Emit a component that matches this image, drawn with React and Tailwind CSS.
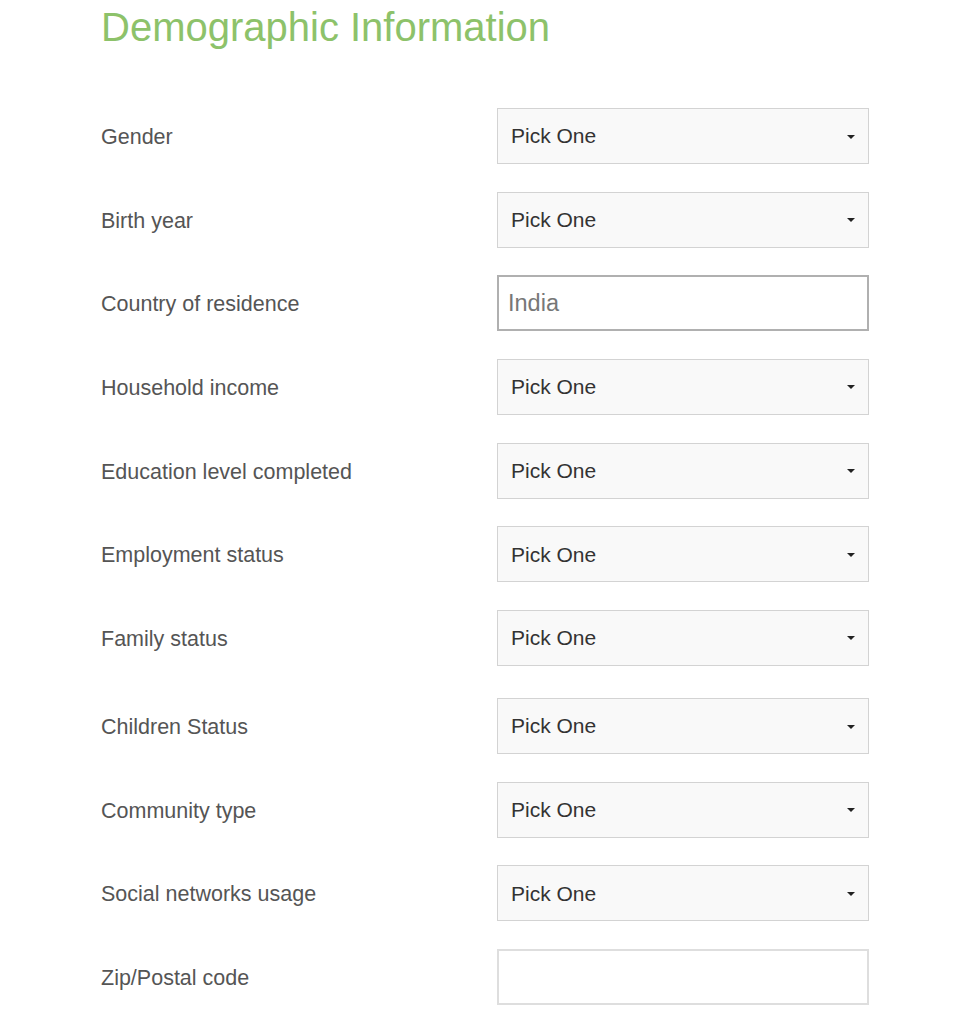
const fields = [
  { label: 'Gender', type: 'select' },
  { label: 'Birth year', type: 'select' },
  { label: 'Country of residence', type: 'text', value: 'India' },
  { label: 'Household income', type: 'select' },
  { label: 'Education level completed', type: 'select' },
  { label: 'Employment status', type: 'select' },
  { label: 'Family status', type: 'select' },
  { label: 'Children Status', type: 'select', spaced: true },
  { label: 'Community type', type: 'select' },
  { label: 'Social networks usage', type: 'select' },
  { label: 'Zip/Postal code', type: 'empty' },
];

function Field({ field }) {
  if (field.type === 'select') {
    return (
      <div className="flex h-[56px] w-[372px] items-center justify-between border border-[#d3d3d3] bg-[#f9f9f9] pl-[13px] pr-[13px]">
        <span className="text-[21px] text-[#333]">Pick One</span>
        <span className="mt-[1px] h-0 w-0 border-x-[4px] border-t-[4px] border-x-transparent border-t-[#222]" />
      </div>
    );
  }
  if (field.type === 'text') {
    return (
      <div className="flex h-[56px] w-[372px] items-center border-2 border-[#b0b0b0] bg-white pl-[9px]">
        <span className="text-[23.5px] text-[#777]">{field.value}</span>
      </div>
    );
  }
  return <div className="h-[56px] w-[372px] border-2 border-[#dedede] bg-white" />;
}

export default function App() {
  return (
    <div className="min-h-[1024px] bg-white font-['Liberation_Sans',Arial,sans-serif]">
      <div className="pl-[101px] pt-[4px]">
        <h1 className="text-[40px] leading-[46px] text-[#8dc26a]">Demographic Information</h1>
        <div className="mt-[58px] flex flex-col gap-y-[27.67px]">
          {fields.map((field) => (
            <div key={field.label} className={`flex items-center ${field.spaced ? 'mt-[4.5px]' : ''}`}>
              <span className="w-[396px] pt-[2px] text-[21.5px] text-[#555]">{field.label}</span>
              <Field field={field} />
            </div>
          ))}
        </div>
      </div>
    </div>
  );
}
